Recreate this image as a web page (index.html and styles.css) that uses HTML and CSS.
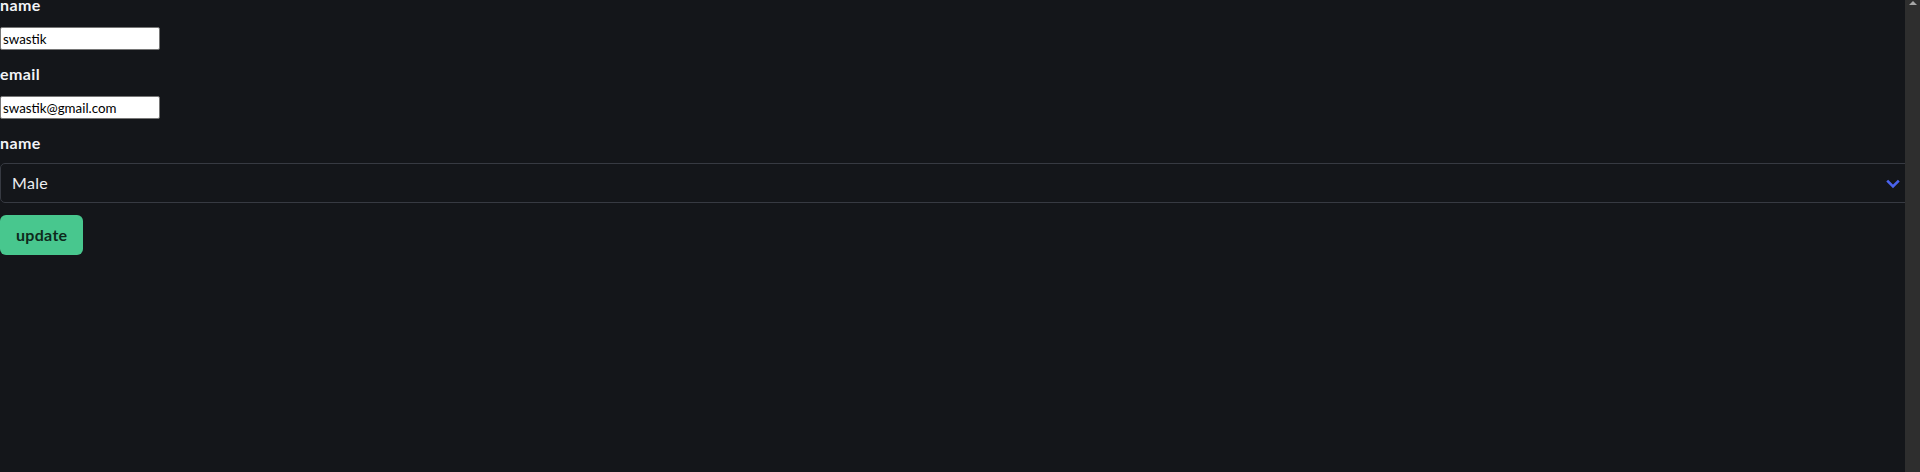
FILE: index.html
```html
<!DOCTYPE html>
<html lang="en">
<head>
<meta charset="utf-8">
<title>Update user</title>
<link rel="stylesheet" href="styles.css">
</head>
<body>
<form class="form">
  <label class="label" for="name">name</label>
  <input class="input" id="name" type="text" value="swastik">
  <label class="label" for="email">email</label>
  <input class="input" id="email" type="text" value="swastik@gmail.com">
  <label class="label label-tight" for="gender">name</label>
  <div class="select-wrap">
    <select class="select" id="gender">
      <option>Male</option>
      <option>Female</option>
    </select>
    <svg class="select-arrow" width="14" height="10" viewBox="0 0 14 10" aria-hidden="true">
      <path d="M1.2 1.6 L7 7.4 L12.8 1.6" fill="none" stroke="#4a63ee" stroke-width="2.6" stroke-linecap="butt" stroke-linejoin="miter"/>
    </svg>
  </div>
  <button class="button" type="button">update</button>
</form>
<div class="scrollbar"><div class="scrollbar-arrow"></div></div>
</body>
</html>
```
FILE: styles.css
```css
html, body {
  margin: 0;
  padding: 0;
  height: 100%;
  overflow: hidden;
  background: #14161a;
}

body {
  font-family: Lato, "Liberation Sans", sans-serif;
  color: #eceef2;
}

.form {
  display: flex;
  flex-direction: column;
  align-items: flex-start;
  margin: -7px 0 0 0;
}

.label {
  display: block;
  font-size: 16px;
  font-weight: 700;
  line-height: 24px;
  letter-spacing: 0.4px;
  color: #f2f3f6;
  margin-bottom: 10px;
}

.label-tight {
  margin-bottom: 8px;
}

.input {
  box-sizing: border-box;
  width: 160px;
  height: 23px;
  margin: 0 0 12px 0;
  padding: 0 2px;
  border: 1px solid #767676;
  border-radius: 2px;
  background: #ffffff;
  color: #000000;
  font-family: Lato, "Liberation Sans", sans-serif;
  font-size: 13.33px;
  line-height: 21px;
  outline: none;
}

.select-wrap {
  position: relative;
  width: 1916px;
  margin-bottom: 12px;
}

.select {
  display: block;
  box-sizing: border-box;
  width: 100%;
  height: 40px;
  margin: 0;
  padding: 0 40px 0 11px;
  border: 1px solid #373a42;
  border-radius: 5px;
  background: #14161a;
  color: #eceef2;
  font-family: Lato, "Liberation Sans", sans-serif;
  font-size: 16px;
  letter-spacing: 0.3px;
  line-height: 38px;
  appearance: none;
  -webkit-appearance: none;
  outline: none;
}

.select-arrow {
  position: absolute;
  right: 16px;
  top: 16px;
  pointer-events: none;
}

.button {
  box-sizing: border-box;
  height: 40px;
  margin: 0;
  padding: 0 16px;
  border: none;
  border-radius: 6px;
  background: #48c78e;
  color: #0e2a1c;
  font-family: Lato, "Liberation Sans", sans-serif;
  font-size: 16px;
  font-weight: 700;
  letter-spacing: 0.3px;
  line-height: 40px;
  cursor: pointer;
}

.scrollbar {
  position: fixed;
  top: 0;
  right: 0;
  width: 15px;
  height: 100%;
  background: #2e2e2e;
}

.scrollbar-arrow {
  width: 0;
  height: 0;
  margin: 1px auto 0 auto;
  border-left: 4px solid transparent;
  border-right: 4px solid transparent;
  border-bottom: 4px solid #a6a6a6;
}
```
